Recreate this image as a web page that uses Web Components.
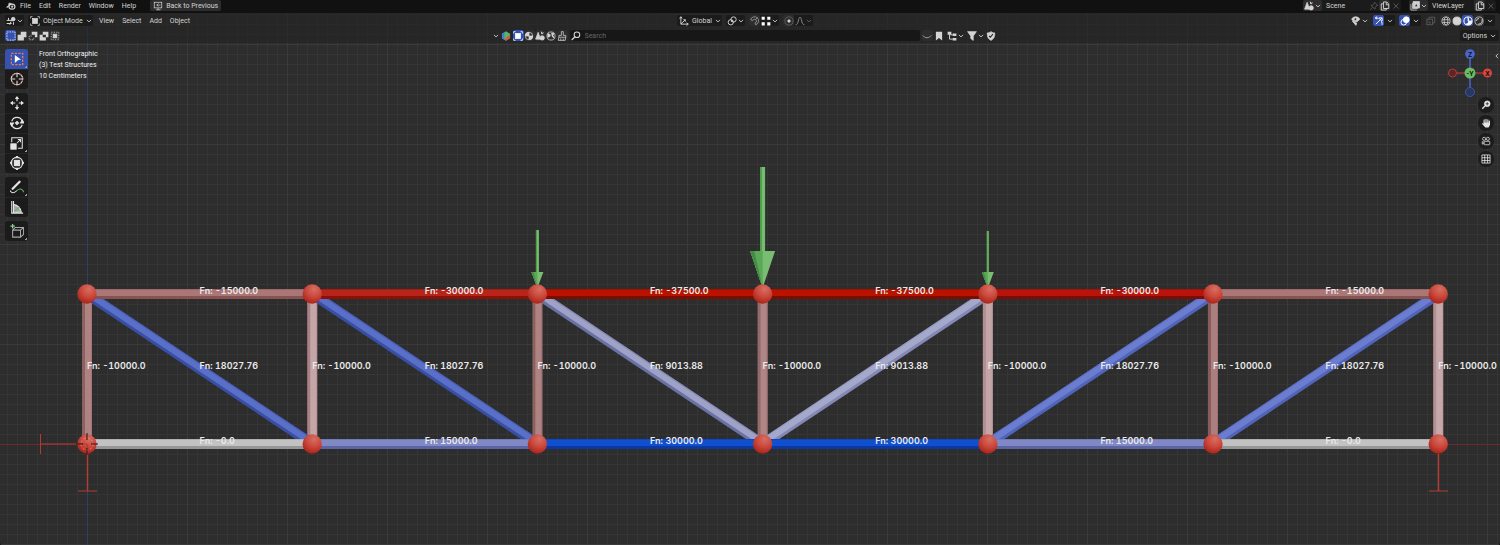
<!DOCTYPE html>
<html lang="en">
<head>
<meta charset="utf-8">
<title>Test Structures</title>
<style>
  html, body {
    margin: 0;
    height: 100%;
    background: #111;
    overflow: hidden;
  }

  body {
    --text: #d4d4d4;
    --field: #1b1b1b;
    --raised: #2d2d2d;
    --active: #3552b0;
    color: var(--text);
    font: 400 7px/10px Roboto, "Liberation Sans", sans-serif;
    font-feature-settings: "tnum";
  }
</style>
</head>
<body>
<bl-window></bl-window>

<script>
// every element is a style + a bit of markup, so one small base does the setup
class Base extends HTMLElement {
  constructor() {
    super(); // !required!
    this.dom = this.attachShadow({ mode: "open" });
  }

  connectedCallback() {
    const temp = document.createElement("template");
    temp.innerHTML = `<style>
      * { box-sizing: border-box; }
      button, input, select {
        appearance: none; margin: 0; padding: 0; border: 0; border-radius: 2px;
        background: none; color: inherit; font: inherit; font-feature-settings: inherit;
      }
    </style>${this.template()}`;
    this.dom.replaceChildren(document.importNode(temp.content, true));
  }
}

// icons, all on a 16 x 16 board
const icons = {
  blender: `<path d="M1 10.5 8 5H3.500M8 5l-2.500-2" stroke-width="1.800"/><ellipse cx="9.500" cy="9" rx="4.800" ry="4" stroke-width="1.800"/><circle cx="9.800" cy="9" r="1.300" fill="currentColor"/>`,
  back: `<rect x="2" y="2" width="12" height="9"/><path d="M12 6.500H6M8.500 4 6 6.500 8.500 9M5 14h7M8 11v3"/>`,
  down: `<path d="m2.500 5 5.500 5.500L13.500 5" stroke-width="2.400"/>`,
  left: `<path d="m11 2-6 6 6 6" stroke-width="2.400"/>`,
  editor: `<path d="M1 7h9M4 3v4M1 12h8M8 9l-2 5M12 10v4" stroke-width="1.600"/><circle cx="11.500" cy="5" r="3" fill="currentColor"/>`,
  object: `<rect x="4" y="4" width="8" height="8" fill="currentColor"/><path d="M1 4V1h3M12 1h3v3M15 12v3h-3M4 15H1v-3"/>`,
  axes: `<path d="M3 2v11h11M3 13l7-7M1 4l2-3 2 3M12 11l3 2-3 2M7 6h3v3" stroke-width="1.500"/>`,
  pivot: `<circle cx="6" cy="10" r="4.200" stroke-width="1.500"/><circle cx="10.500" cy="5.500" r="4.200" stroke-width="1.500"/><circle cx="8" cy="8" r="1" fill="currentColor"/>`,
  magnet: `<path d="M1 6a6.500 6.500 0 1 1 8 8l-1-3a3 3 0 1 0-3.500-3.500ZM12 2l-2 3" stroke-width="1.500" stroke="#8e8e8e"/>`,
  snapgrid: `<path d="M1 1h5v5H1zM10 1h5v5h-5zM1 10h5v5H1zM10 10h5v5h-5z" fill="#fff" stroke="none"/>`,
  prop: `<circle cx="8" cy="8" r="6.500" stroke-opacity=".35"/><circle cx="8" cy="8" r="2" fill="currentColor"/>`,
  curve: `<path d="M1 14C6 14 5 2 8 2s2 12 7 12" stroke-width="1.500" stroke="#8e8e8e"/>`,
  eye: `<path d="M1 5c3-5 10-5 13 0-2 3-4 4-6 4S3 8 1 5Z" fill="currentColor"/><circle cx="7" cy="5" r="2" fill="#222"/><path d="m2 8 6 7 1-4Z" fill="currentColor"/>`,
  gizmo: `<path d="M2 3c8 0 11 4 11 11M3 13 13 3M8 3h5v5M2 3l3-2M2 3l3 2" stroke-width="1.500"/>`,
  overlay: `<circle cx="10" cy="6" r="4.800" fill="currentColor"/><circle cx="6" cy="10" r="4.500" stroke-width="1.600"/>`,
  xray: `<rect x="1.500" y="5" width="9" height="9"/><path d="M5 5V2h9v9h-3M5 8v3h3"/>`,
  wire: `<circle cx="8" cy="8" r="6.500"/><ellipse cx="8" cy="8" rx="3" ry="6.500"/><path d="M2 6h12M2 10.500h12"/>`,
  solid: `<circle cx="8" cy="8" r="6.500" fill="currentColor"/>`,
  material: `<circle cx="8" cy="8" r="6.500" stroke-width="1.600"/><path d="M8 2v6h6a6 6 0 0 1-9 5c4-1 5-4 3-11Z" fill="currentColor"/>`,
  rendered: `<circle cx="8" cy="8" r="6.500"/><path d="M4 8a4 4 0 0 1 4-4M13 5c1 5-2 8-6 8" stroke-width="1.500"/>`,
  scene: `<path d="m5 2 4 11H1Z" fill="currentColor"/><circle cx="11.500" cy="11" r="3.500" fill="currentColor"/><path d="m10 1 1 4M13 2l-1 3" stroke-width="1.600"/>`,
  layers: `<path d="M1.500 5v9.500H11M4 3v9h9"/><rect x="5" y="1" width="10" height="10" fill="currentColor"/><path d="m7 9 3-5 3 5Z" fill="#222"/>`,
  pin: `<path d="m9 2 5 5-2 .500-2 3-.500 2.500L3 7l3-.500 2.500-2.500ZM6 10l-4 4"/>`,
  copy: `<path d="M5 4.500H2v10h8V12" stroke-width="1.500"/><path d="M5.500 1.500H11L14 5v7H5.500ZM10 2v4h4" stroke-width="1.500"/>`,
  close: `<path d="m4 4 8 8M12 4l-8 8"/>`,
  selset: `<rect x="1.500" y="1.500" width="13" height="13" stroke-dasharray="2.500 1.500"/>`,
  selext: `<path d="M6 1h9v9h-4v5H1V6h5Z" fill="currentColor" stroke="none"/>`,
  selsub: `<path d="M6 1h9v9h-4V6H6Z" fill="currentColor" stroke="none"/><path d="M6 8H2v6h7v-4" stroke-dasharray="2 1.500"/>`,
  seldif: `<path d="M6 1h9v9h-4v5H1V6h5Zm0 5v4h5V6Z" fill="currentColor" fill-rule="evenodd" stroke="none"/>`,
  selint: `<rect x="5" y="5" width="6" height="6" fill="currentColor"/><rect x="2" y="2" width="12" height="12" stroke-dasharray="2 2"/>`,
  cube: `<path d="m8 .500 6.500 3.800v7.400L8 15.500l-6.500-3.800V4.300Z" fill="#55b56a" stroke="none"/><path d="M14.500 6v5.700L8 15.500l-3-1.800Z" fill="#d8543f" stroke="none"/><path d="m1.500 4.300 4-2.400V14l-4-2.300Z" fill="#3c7fd8" stroke="none"/>`,
  matball: `<circle cx="8" cy="8" r="6"/><path d="M8 2v6h6a6 6 0 0 1-6 6V8H2a6 6 0 0 1 6-6Z" fill="currentColor"/>`,
  world: `<circle cx="8" cy="8" r="6.500"/><path d="m3 4 4 2-1 3-3 1ZM9 3l4 1-2 3 2 4-3-2Z" fill="currentColor"/>`,
  brush: `<path d="M7 1h3v6h4v3H3V7h4ZM3 10l-1 5h11l1-5M6 15v-3M10 15v-3"/>`,
  search: `<circle cx="9.500" cy="6" r="4.500" stroke-width="1.700"/><path d="m6 9.500-5 5" stroke-width="2"/>`,
  smile: `<path d="M1 7c4 5 10 5 14 0" stroke-width="1.600" stroke="#999"/>`,
  bookmark: `<path d="M3 1h10v14l-5-4-5 4Z" fill="currentColor" stroke="none"/>`,
  tree: `<path d="M1 1h6v5H1zM9 4h6v4H9zM9 11h6v4H9z" fill="currentColor" stroke="none"/><path d="M4 6v7h5M4 6h5" stroke-width="1.500"/>`,
  filter: `<path d="M1 1h14l-5 7v7l-4-3V8Z" fill="currentColor"/>`,
  shield: `<path d="M8 1c3 2 4 2 6 2 0 6-1 9-6 12-5-3-6-6-6-12 2 0 3 0 6-2Z" fill="currentColor"/><path d="m5 8 2 2 4-5" stroke="#222" stroke-width="1.800"/>`,
  select: `<rect x="1.500" y="1.500" width="13" height="13" stroke="#e0805c" stroke-width="1.500" stroke-dasharray="2.500 1.500"/><path d="m5.500 3.500 7 5-3.500 1-3.500 3Z" fill="#fff" stroke="none"/>`,
  cursor: `<circle cx="8" cy="8" r="6.500"/><circle cx="8" cy="8" r="6.500" stroke="#d0564a" stroke-dasharray="2.400 2.300"/><path d="M8 1v5M8 10v5M1 8h5M10 8h5"/>`,
  move: `<path d="m8 0 2.500 3.500h-5ZM8 16l2.500-3.500h-5ZM0 8l3.500-2.500v5ZM16 8l-3.500-2.500v5Z" fill="currentColor" stroke="none"/><path d="M8 3v3M8 10v3M3 8h3M10 8h3" stroke-width="1.300"/>`,
  rotate: `<path d="M2 6a6.300 6.300 0 0 1 12 0M2 10a6.300 6.300 0 0 0 12 0" stroke-width="1.300"/><path d="M8 6.200 9.800 8 8 9.800 6.200 8ZM0 8h4l-2 3.500ZM12 8h4l-2-3.500Z" fill="currentColor"/>`,
  scale: `<path d="M2 7V2h12v12H9"/><rect x="1" y="9" width="6" height="6" fill="currentColor"/><path d="m8 8 4-4M9 4h3v3"/>`,
  transform: `<circle cx="8" cy="8" r="6.500" stroke-width="1.200"/><rect x="5" y="5" width="6" height="6" fill="currentColor"/><path d="M6.500 2 8 0l1.500 2ZM6.500 14 8 16l1.500-2ZM2 6.500 0 8l2 1.500ZM14 6.500 16 8l-2 1.500Z" fill="currentColor"/>`,
  annotate: `<path d="m3 10 8-8" stroke-width="2.600" stroke-linecap="round"/><path d="M0 12c2 4 5 3 8 0"/><path d="M8 12c3-3 6-2 8 2" stroke="#63b562"/>`,
  measure: `<path d="M2 1v14h13M4 1v14" stroke-width="1.300"/><path d="M4 5c5 1 8 4 9 9H4Z" fill="currentColor" fill-opacity=".7"/><path d="m5 13 6-5" stroke="#63b562"/>`,
  addcube: `<path d="M3 7v8h9V7ZM3 7l3-3h9.500v8L12 15M12 7l3.500-3" stroke="#a8a8a8"/><path d="M3 0v5M.500 2.500h5" stroke="#8fd08a" stroke-width="1.400"/>`,
  zoom: `<circle cx="10" cy="6" r="4.500" fill="currentColor"/><path d="m7 9-5 5" stroke-width="2.200"/><path d="M7.500 6h5M10 3.500v5" stroke="#222"/>`,
  hand: `<path d="M5 8V3M8 7V2M11 8V3M13.500 9V5" stroke-width="1.800" stroke-linecap="round"/><path d="M4 7h10.400v4l-2.400 4H7L1.500 9 3 8l2 2Z" fill="currentColor" stroke="none"/>`,
  camera: `<circle cx="5" cy="4.500" r="2.500"/><circle cx="11" cy="4.500" r="2.500"/><rect x="5" y="8.500" width="9" height="5.500" rx="1"/><path d="M5 10 2 9v4l3-1"/>`,
  grid: `<path d="M1.500 1.500h13v13h-13ZM6 1.500v13M10.500 1.500v13M1.500 6h13M1.500 10.500h13" stroke-width="1.300"/>`
};

class Icon extends Base {
  template() {
    return `<style>
      :host { display: block; flex: none; width: 10px; height: 10px; }
      :host([size="small"]) { width: 6px; height: 6px; }
      :host([size="large"]) { width: 14px; height: 14px; }
      svg { display: block; width: 100%; height: 100%; }
    </style>
    <svg viewBox="0 0 16 16" fill="none" stroke="currentColor" stroke-width="1.200" aria-hidden="true">${icons[this.getAttribute("name")]}</svg>`;
  }
}

// square or text button; attributes: icon, label, drop, on, raised, dim
class Button extends Base {
  template() {
    const icon = this.getAttribute("icon");
    return `<style>
      :host { display: block; flex: none; }
      button { display: flex; align-items: center; justify-content: center; gap: 1px; min-width: 11px; height: 11px; }
      :host([text]) button { padding: 0 3px; gap: 3px; }
      :host([drop]:not([text])) button { padding: 0 1px; }
      :host([box]) button { background: var(--field); }
      :host([raised]) button { background: var(--raised); }
      :host([on]) button { background: var(--active); color: #fff; }
      :host([dim]) button { color: #666; }
    </style>
    <button type="button" aria-label="${this.getAttribute("label") || this.textContent}">
      ${icon ? `<bl-icon name="${icon}"></bl-icon>` : ""}<slot></slot>
      ${this.hasAttribute("drop") ? `<bl-icon name="down" size="small"></bl-icon>` : ""}
    </button>`;
  }
}

class Menu extends Base {
  template() {
    return `<style>
      :host { display: flex; gap: 8px; }
      button { height: 11px; }
    </style>
    ${this.getAttribute("items").split(",").map(i => `<button type="button">${i}</button>`).join("")}`;
  }
}

class Select extends Base {
  template() {
    const label = this.getAttribute("label");
    return `<style>
      :host { display: flex; align-items: center; height: 11px; padding: 0 1px 0 2px; border-radius: 2px; background: var(--field); }
      select { height: 11px; margin: 0 3px; }
    </style>
    <bl-icon name="${this.getAttribute("icon")}"></bl-icon>
    <select aria-label="${label}"><option>${this.getAttribute("value")}</option></select>
    <bl-icon name="down" size="small"></bl-icon>`;
  }
}

// data-block picker of the top bar
class Picker extends Base {
  template() {
    const label = this.getAttribute("label");
    return `<style>
      :host { display: flex; align-items: center; height: 11px; border-radius: 2px; background: var(--field); }
      input { width: 46px; height: 11px; padding: 0 4px; }
    </style>
    <bl-button icon="${this.getAttribute("icon")}" label="Browse ${label}" drop raised></bl-button>
    <input aria-label="${label}" value="${label}">
    ${this.hasAttribute("pin") ? `<bl-button icon="pin" label="Pin scene" dim></bl-button>` : ""}
    <bl-button icon="copy" label="New ${label}" raised></bl-button>
    <bl-button icon="close" label="Remove ${label}" dim></bl-button>`;
  }
}

class TopBar extends Base {
  template() {
    return `<style>
      :host { display: flex; align-items: center; gap: 4px; height: 13px; padding: 0 4px 2px 6px; background: #111; }
      .right { display: flex; gap: 8px; margin-left: auto; }
      .back { margin-left: 10px; }
    </style>
    <bl-icon name="blender"></bl-icon>
    <bl-menu items="File,Edit,Render,Window,Help"></bl-menu>
    <bl-button class="back" icon="back" text raised>Back to Previous</bl-button>
    <div class="right">
      <bl-picker icon="scene" label="Scene" pin></bl-picker>
      <bl-picker icon="layers" label="ViewLayer"></bl-picker>
    </div>`;
  }
}

class Header extends Base {
  template() {
    return `<style>
      :host { display: block; background: rgba(34, 34, 34, .6); }
      .row { display: grid; grid-template-columns: 1fr auto 1fr; align-items: center; height: 15px; padding: 0 5px; }
      .row > div { display: flex; align-items: center; }
      .row .right { justify-content: flex-end; }
      .group { display: flex; border-radius: 2px; background: var(--field); }
      .main .left { gap: 4px; }
      .main bl-menu { margin-left: 2px; }
      .main .center { gap: 4px; margin-right: 10px; }
      .main .right { gap: 4px; }
      .row.tools { padding-right: 1px; }
      .tools .center { gap: 2px; margin-right: 16px; }
      .filters { display: flex; align-items: center; gap: 1px; }
      .search { display: flex; align-items: center; gap: 4px; width: 350px; padding: 0 1px; border-radius: 2px; background: #171717; }
      .search input { flex: 1; height: 11px; }
      .search input::placeholder { color: #666; }
    </style>
    <div class="row main">
      <div class="left">
        <bl-button icon="editor" label="Editor type" drop box></bl-button>
        <bl-select icon="object" label="Mode" value="Object Mode"></bl-select>
        <bl-menu items="View,Select,Add,Object"></bl-menu>
      </div>
      <div class="center">
        <bl-select icon="axes" label="Orientation" value="Global"></bl-select>
        <bl-button icon="pivot" label="Pivot point" drop box></bl-button>
        <span class="group">
          <bl-button icon="magnet" label="Snap" raised></bl-button>
          <bl-button icon="snapgrid" label="Snap to" drop></bl-button>
        </span>
        <span class="group">
          <bl-button icon="prop" label="Proportional editing" raised></bl-button>
          <bl-button icon="curve" label="Falloff" drop dim></bl-button>
        </span>
      </div>
      <div class="right">
        <bl-button icon="eye" label="Visibility" drop></bl-button>
        <span class="group">
          <bl-button icon="gizmo" label="Gizmos" on></bl-button>
          <bl-button label="Gizmo options" drop></bl-button>
        </span>
        <span class="group">
          <bl-button icon="overlay" label="Overlays" on></bl-button>
          <bl-button label="Overlay options" drop></bl-button>
        </span>
        <bl-button icon="xray" label="X-ray" dim></bl-button>
        <span class="group">
          <bl-button icon="wire" label="Wireframe" raised></bl-button>
          <bl-button icon="solid" label="Solid" raised></bl-button>
          <bl-button icon="material" label="Material preview" on></bl-button>
          <bl-button icon="rendered" label="Rendered" raised></bl-button>
          <bl-button label="Shading options" drop></bl-button>
        </span>
      </div>
    </div>
    <div class="row tools">
      <div class="left">
        <bl-button icon="selset" label="Set" on></bl-button>
        <bl-button icon="selext" label="Extend" raised></bl-button>
        <bl-button icon="selsub" label="Subtract" raised></bl-button>
        <bl-button icon="seldif" label="Difference" raised></bl-button>
        <bl-button icon="selint" label="Intersect" raised></bl-button>
      </div>
      <div class="center">
        <bl-icon name="down" size="small"></bl-icon>
        <bl-icon name="cube"></bl-icon>
        <span class="group">
          <bl-button icon="object" label="Models" on></bl-button>
          <bl-button icon="matball" label="Materials" raised></bl-button>
          <bl-button icon="scene" label="Scenes" raised></bl-button>
          <bl-button icon="world" label="Worlds" raised></bl-button>
          <bl-button icon="brush" label="Brushes" raised></bl-button>
        </span>
        <label class="search"><bl-icon name="search"></bl-icon><input aria-label="Search" placeholder="Search"></label>
        <span class="filters">
          <bl-button icon="smile" label="More" dim raised></bl-button>
          <bl-button icon="bookmark" label="Bookmarks"></bl-button>
          <bl-button icon="tree" label="Categories" drop></bl-button>
          <bl-button icon="filter" label="Filter" drop></bl-button>
          <bl-icon name="shield"></bl-icon>
        </span>
      </div>
      <div class="right">
        <bl-button drop box text>Options</bl-button>
      </div>
    </div>`;
  }
}

class Tools extends Base {
  template() {
    const groups = [
      [["select", 1], ["cursor"]],
      [["move"], ["rotate"], ["scale", 1], ["transform"]],
      [["annotate", 1], ["measure"]],
      [["addcube", 1]]
    ];
    const tool = ([name, more]) => `<button type="button" class="${name} ${more ? "more" : ""}" aria-label="${name}"><bl-icon name="${name}" size="large"></bl-icon></button>`;
    return `<style>
      :host { display: flex; flex-direction: column; gap: 4px; }
      div { display: grid; border-radius: 3px; overflow: hidden; }
      button { display: grid; place-items: center; width: 23px; height: 20px; border-radius: 0; background-color: var(--field); color: #e4e4e4; }
      button + button { box-shadow: inset 0 1px #262626; }
      .select { background-color: var(--active); }
      .more { background-image: linear-gradient(135deg, transparent 50%, #999 50%); background-size: 2px 2px; background-repeat: no-repeat; background-position: 20px 17px; }
    </style>
    ${groups.map(g => `<div>${g.map(tool).join("")}</div>`).join("")}`;
  }
}

class Navigation extends Base {
  template() {
    return `<style>
      :host { display: grid; justify-items: end; }
      svg { display: block; width: 44px; height: 48px; }
      text { font-size: 7px; font-weight: 600; text-anchor: middle; fill: #111; }
      .gizmo { padding-right: 2px; }
      .views { display: grid; gap: 2px; }
      button { display: grid; place-items: center; width: 16px; height: 16px; border-radius: 8px; background: #1c1c1c; color: #e4e4e4; }
    </style>
    <div class="gizmo">
      <svg viewBox="0 0 44 48" aria-label="Front view" role="img">
        <path d="M22 5v38" stroke="#4a66cf" stroke-width="1.500"/>
        <path d="M4 24h36" stroke="#a8353a" stroke-width="1.500"/>
        <circle cx="22" cy="5" r="4.800" fill="#4a66cf"/><text x="22" y="7.500">Z</text>
        <circle cx="22" cy="43" r="4.500" fill="#29385f" stroke="#3c55b0"/>
        <circle cx="4.500" cy="24" r="4" fill="#5c2626" stroke="#b83a36"/>
        <circle cx="39.500" cy="24" r="4.500" fill="#d8453a"/><text x="39.500" y="26.500">X</text>
        <circle cx="22" cy="24" r="5.500" fill="#68bd63"/><text x="22" y="26.500">-Y</text>
      </svg>
    </div>
    <div class="views">
      ${["zoom", "hand", "camera", "grid"].map(i => `<button type="button" aria-label="${i}"><bl-icon name="${i}"></bl-icon></button>`).join("")}
    </div>`;
  }
}

// the truss: six bays, axial force on every bar
const bay = 225.2;
const left = 87;
const top_ = 294;
const bottom = 444;

const chords = {
  top: [
    ["-15000.0", "#ab7676", "#875252"], ["-30000.0", "#b9241a", "#8a1008"], ["-37500.0", "#b91300", "#7c0c00"],
    ["-37500.0", "#b91300", "#7c0c00"], ["-30000.0", "#b9140c", "#7e0c06"], ["-15000.0", "#ab7676", "#875252"]
  ],
  bottom: [
    ["-0.0", "#c2c2c2", "#969696"], ["15000.0", "#8088c6", "#5d64a4"], ["30000.0", "#1050cf", "#0b38a2"],
    ["30000.0", "#1050cf", "#0b38a2"], ["15000.0", "#8088c6", "#5d64a4"], ["-0.0", "#c2c2c2", "#969696"]
  ]
};
const posts = [
  ["#b08383", "#8b6262"], ["#c4a6a9", "#a98084"], ["#b08383", "#8b6262"], ["#b08585", "#966a6a"],
  ["#c4a6a9", "#b08e91"], ["#ab7f7f", "#875c5c"], ["#c6a8aa", "#b39193"]
];
const diagonals = [
  ["18027.76", "#5a6fc8", "#394fa4"], ["18027.76", "#5a6fc8", "#394fa4"], ["9013.88", "#9ea2c6", "#6c71a4"],
  ["9013.88", "#a4a8cb", "#8488b6"], ["18027.76", "#6b7dd0", "#5164b8"], ["18027.76", "#6b7dd0", "#5164b8"]
];

class Scene extends Base {
  bar(x1, y1, x2, y2, width, color, shade) {
    const length = Math.hypot(x2 - x1, y2 - y1);
    const angle = Math.atan2(y2 - y1, x2 - x1) * 180 / Math.PI;
    return `<g transform="translate(${x1} ${y1}) rotate(${angle})">
      <rect y="${-width / 2}" width="${length}" height="${width}" fill="${shade}"/>
      <rect y="${1 - width / 2}" width="${length}" height="${width - 4}" fill="${color}"/>
      <rect y="${-width / 2}" width="${length}" height="1" fill="${color}" fill-opacity=".6"/>
    </g>`;
  }

  label(x, y, force) {
    return `<text x="${x}" y="${y}">Fn: ${force}</text>`;
  }

  arrow(x, from, neck, shaft, head) {
    const tip = 288;
    return `<path d="M${x - shaft / 2} ${from}h${shaft}V${neck}h${-shaft}Z" fill="#74bd70"/>
      <path d="M${x - shaft / 2} ${from}h${shaft / 3}V${neck}h${-shaft / 3}Z" fill="#4b9a49"/>
      <path d="M${x - head / 2} ${neck}h${head}L${x} ${tip}Z" fill="#78bd72"/>
      <path d="M${x - head / 2} ${neck}h${head / 2}V${tip}Z" fill="#5aa858"/>
      <path d="M${x - head / 2} ${neck}h${head / 6}L${x} ${tip}Z" fill="#438c43"/>`;
  }

  template() {
    const node = i => left + bay * i;
    let bars = "", labels = "", joints = "";

    posts.forEach(([color, shade], i) => {
      bars += this.bar(node(i), top_, node(i), bottom, 10, color, shade);
      labels += this.label(node(i), 369, "-10000.0");
    });
    diagonals.forEach(([force, color, shade], i) => {
      const down = i < 3;
      bars += this.bar(node(i), down ? top_ : bottom, node(i + 1), down ? bottom : top_, 10, color, shade);
      labels += this.label(node(i) + bay / 2, 369, force);
    });
    ["top", "bottom"].forEach(side => {
      const y = side === "top" ? top_ : bottom;
      chords[side].forEach(([force, color, shade], i) => {
        bars += this.bar(node(i), y, node(i + 1), y, 10, color, shade);
        labels += this.label(node(i) + bay / 2, y, force);
      });
      for (let i = 0; i <= 6; i++) joints += `<circle cx="${node(i)}" cy="${y}" r="9.700" fill="url(#ball)"/>`;
    });

    return `<style>
      :host { display: block; min-height: 0; background: #2d2d2d; }
      svg { display: block; width: 100%; height: 100%; }
      text { font: 600 9px Inter, "Liberation Sans", sans-serif; font-feature-settings: "tnum"; fill: #eaeaea; }
    </style>
    <svg viewBox="0 13 1500 532" preserveAspectRatio="xMidYMid slice">
      <defs>
        <pattern id="fine" x="87" y="444" width="10" height="10" patternUnits="userSpaceOnUse">
          <path d="M0 0h10v1H1v9H0Z" fill="#353535"/>
        </pattern>
        <pattern id="coarse" x="87" y="444" width="100" height="100" patternUnits="userSpaceOnUse">
          <path d="M0 0h100v1H1v99H0Z" fill="#3a3a3a"/>
        </pattern>
        <radialGradient id="ball" cx=".6" cy=".25" r=".8">
          <stop offset="0" stop-color="#d66f63"/><stop offset=".5" stop-color="#cb483c"/><stop offset="1" stop-color="#a51f15"/>
        </radialGradient>
      </defs>
      <rect y="13" width="1500" height="532" fill="url(#fine)"/>
      <rect y="13" width="1500" height="532" fill="url(#coarse)"/>
      <path d="M87 13h1v532h-1Z" fill="#2f4068"/>
      <path d="M0 444.500h1500" stroke="#6f292d"/>
      ${bars}
      ${this.arrow(node(2), 230, 272, 3, 12)}
      ${this.arrow(node(3), 167, 251, 5, 25)}
      ${this.arrow(node(4), 231, 272, 2, 12)}
      ${joints}
      <g fill="none" stroke="#b03c34">
        <path d="M40.500 434v20M40 444h47M78 491h19M1429 491h19"/>
        <path d="M87.500 444v47M1438.500 454v37" stroke-width="1.500"/>
      </g>
      <circle cx="87" cy="444" r="6" fill="none" stroke="#e08a80" stroke-dasharray="2 2"/>
      <path d="M87 433v7M87 448v7M76 444h7M91 444h7" stroke="#2a1212"/>
      ${labels}
    </svg>`;
  }
}

class Window extends Base {
  template() {
    return `<style>
      :host { display: grid; grid-template-rows: auto 1fr; height: 100vh; }
      main { display: grid; grid-template-columns: 100%; grid-template-rows: 100%; min-height: 0; overflow: hidden; border-radius: 3px; }
      bl-scene, .overlay { grid-area: 1 / 1; }
      .overlay { display: grid; grid-template-rows: auto 1fr; z-index: 1; }
      .body { display: flex; align-items: flex-start; padding: 6px 5px 0; }
      p { margin: 0 0 0 11px; line-height: 11px; color: #f0f0f0; }
      bl-navigation { margin-left: auto; }
      .open { margin: 4px -5px 0 0; }
      bl-scene { width: 100%; height: 100%; }
    </style>
    <bl-topbar></bl-topbar>
    <main>
      <bl-scene></bl-scene>
      <div class="overlay">
        <bl-header></bl-header>
        <div class="body">
          <bl-tools></bl-tools>
          <p>Front Orthographic<br>(3) Test Structures<br>10 Centimeters</p>
          <bl-navigation></bl-navigation>
          <bl-icon class="open" name="left" size="small"></bl-icon>
        </div>
      </div>
    </main>`;
  }
}

const parts = {
  "bl-icon": Icon,
  "bl-button": Button,
  "bl-menu": Menu,
  "bl-select": Select,
  "bl-picker": Picker,
  "bl-topbar": TopBar,
  "bl-header": Header,
  "bl-tools": Tools,
  "bl-navigation": Navigation,
  "bl-scene": Scene,
  "bl-window": Window
};
Object.keys(parts).forEach(tag => {
  if (window.customElements.get(tag) === undefined) window.customElements.define(tag, parts[tag]);
});
</script>
</body>
</html>
